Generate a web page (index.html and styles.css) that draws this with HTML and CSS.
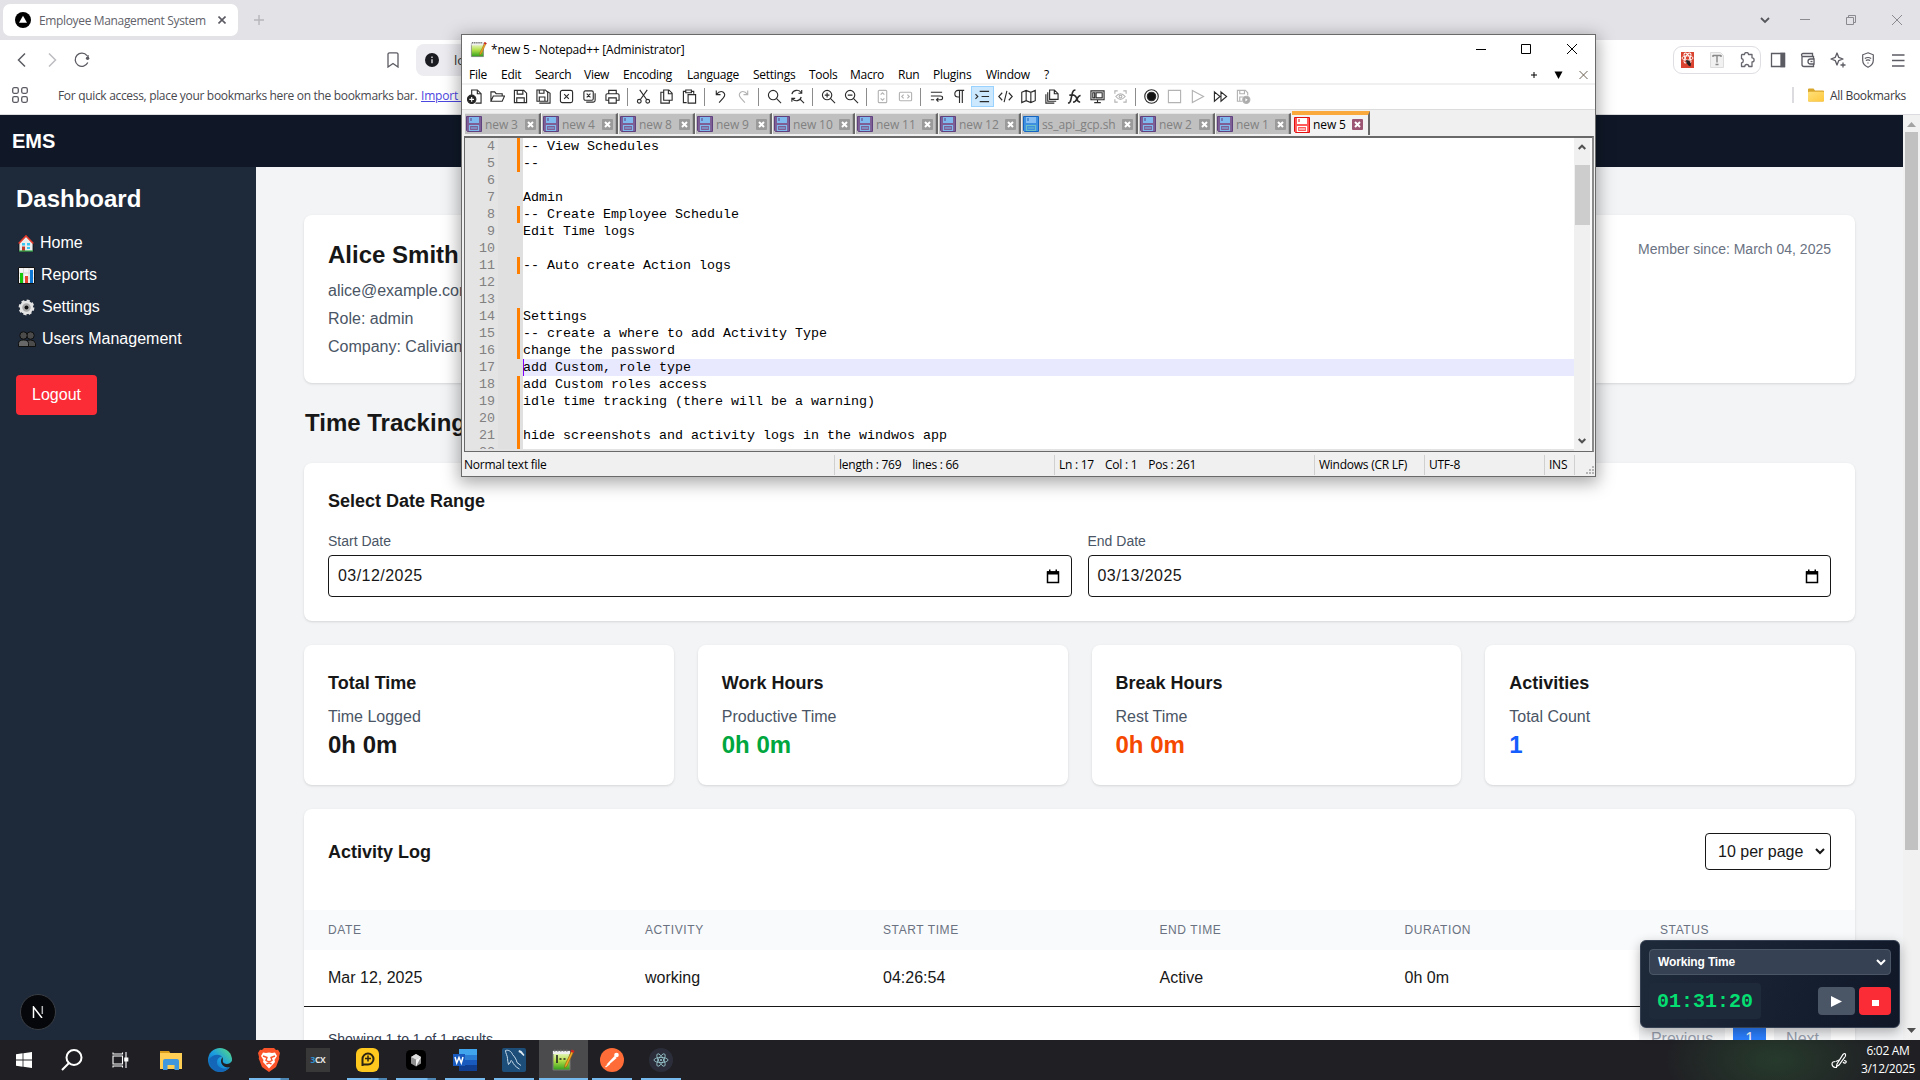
FILE: index.html
```html
<!DOCTYPE html>
<html lang="en">
<head>
<meta charset="utf-8">
<title>Employee Management System</title>
<link rel="stylesheet" href="styles.css">
</head>
<body>
<svg class="defs" width="0" height="0" aria-hidden="true">
  <defs>
    <linearGradient id="edge" x1="0" y1="1" x2="1" y2="0"><stop offset="0" stop-color="#0c59a4"/><stop offset=".5" stop-color="#1b9de2"/><stop offset="1" stop-color="#5be07a"/></linearGradient>
    <linearGradient id="green" x1="0" y1="0" x2="0" y2="1"><stop offset="0" stop-color="#f4fbe0"/><stop offset=".5" stop-color="#b5e04a"/><stop offset="1" stop-color="#2f9e1c"/></linearGradient>
    <linearGradient id="fold" x1="0" y1="0" x2="1" y2="1"><stop offset="0" stop-color="#ffe07a"/><stop offset="1" stop-color="#ffc83c"/></linearGradient>
  </defs>
  <symbol id="disk" viewBox="0 0 16 16"><path d="M.5.5h15v15H1.5l-1-1z" fill="#7d5f95" stroke="#5f4180"/><path d="M3 1h10v6H3z" fill="#7fb9ee"/><path d="M5 2v3" stroke="#5f4180"/><path d="M3 9.500h10M3.500 9.500v5h9v-5M5 12h6" fill="none" stroke="#7fb9ee" stroke-width="1.200"/></symbol>
  <symbol id="disk-blue" viewBox="0 0 16 16"><path d="M.5.5h15v15H1.500l-1-1z" fill="#3f8fe0" stroke="#1565c0"/><path d="M3 1h10v6H3z" fill="#86bdf2"/><path d="M5 2v3" stroke="#1565c0"/><path d="M3.500 9.500h9v5h-9zM5 12h6" fill="none" stroke="#6cc0c8" stroke-width="1.200"/></symbol>
  <symbol id="disk-red" viewBox="0 0 16 16"><path d="M.5.5h15v15H1.500l-1-1z" fill="#ff5a5a" stroke="#e01010"/><path d="M3 1h10v6H3z" fill="#fff"/><path d="M5 2v3" stroke="#e01010"/><path d="M3.500 9.500h9v5h-9zM5 12h6" fill="none" stroke="#fff" stroke-width="1.200"/></symbol>
  <symbol id="tab-close" viewBox="0 0 11 11"><rect width="11" height="11" rx="1"/><path d="M3 3l5 5M8 3L3 8" stroke="#fff" stroke-width="2"/></symbol>
  <symbol id="npp" viewBox="0 0 24 24"><path d="M2 3h17v19H2z" fill="url(#green)" stroke="#777"/><path d="M2 3h17v3H2z" fill="#eee"/><path d="M3 2.500h15" stroke="#666" stroke-width="2" stroke-dasharray="1.500 1.500"/><path d="M21 2l2 1-7 15-2.500 2 .5-3z" fill="#f5a623" stroke="#8a5a10" stroke-width=".6"/><path d="M20.500 1.500l3 1.500-1 2-3-1.500z" fill="#c22"/></symbol>
</svg>

<div class="desktop">
  <section class="browser">
    <div class="tabstrip">
      <div class="tab">
        <svg width="16" height="16" viewBox="0 0 16 16"><circle cx="8" cy="8" r="8"/><path d="M8 3.800l4 7H4z" fill="#fff"/></svg>
        <span class="tab-title">Employee Management System</span>
        <svg class="tab-x" width="8" height="8" viewBox="0 0 8 8" stroke="#5b5b63" stroke-width="1.600"><path d="M.5.5l7 7M7.500.5l-7 7"/></svg>
      </div>
      <svg class="plus" width="10" height="10" viewBox="0 0 10 10" stroke="#b6b6bb" stroke-width="1.400"><path d="M5 0v10M0 5h10"/></svg>
      <div class="win-buttons">
        <svg width="10" height="10" viewBox="0 0 10 10" fill="none" stroke="#55555c" stroke-width="1.800"><path d="M1 3l4 4 4-4"/></svg>
        <svg width="10" height="10" viewBox="0 0 10 10" fill="none" stroke="#8a8a90"><path d="M0 4.500h10"/></svg>
        <svg width="10" height="10" viewBox="0 0 10 10" fill="none" stroke="#8a8a90"><path d="M.5 2.500h7v7h-7zM2.500 2.500v-2h7v7h-2"/></svg>
        <svg width="10" height="10" viewBox="0 0 10 10" fill="none" stroke="#8a8a90"><path d="M0 0l10 10M10 0L0 10"/></svg>
      </div>
    </div>

    <div class="navbar">
      <div class="nav-left">
        <svg width="16" height="16" viewBox="0 0 16 16" fill="none" stroke="#5b5b63" stroke-width="1.500"><path d="M11 1.500L4.500 8l6.500 6.500"/></svg>
        <svg width="16" height="16" viewBox="0 0 16 16" fill="none" stroke="#bdbdc2" stroke-width="1.500"><path d="M5 1.500L11.500 8 5 14.500"/></svg>
        <svg width="16" height="16" viewBox="0 0 16 16" fill="none" stroke="#5b5b63" stroke-width="1.300"><path d="M13.800 10.500A6.600 6.600 0 1 1 13 3.600"/><circle cx="13.600" cy="6.200" r="1.700" fill="#5b5b63" stroke="none"/><path d="M14 3v3"/></svg>
      </div>
      <svg width="12" height="16" viewBox="0 0 12 16" fill="none" stroke="#5b5b63" stroke-width="1.300"><path d="M2.500.8h7a1.500 1.500 0 0 1 1.500 1.500V15l-5-3.500L1 15V2.300A1.500 1.500 0 0 1 2.500.8z"/></svg>
      <div class="urlbar">
        <svg width="14" height="14" viewBox="0 0 14 14"><circle cx="7" cy="7" r="7" fill="#1b1b22"/><path d="M7 6.200v4M7 3.500v1.400" stroke="#fff" stroke-width="1.200"/></svg>
        <span>localhost</span>
      </div>
      <div class="ext-pill">
        <svg width="13" height="16" viewBox="0 0 13 16"><path d="M0 0h13v16H0z" fill="#d9432f"/><g fill="none" stroke="#fff" stroke-width=".9"><ellipse cx="6.500" cy="6" rx="5.500" ry="2.200"/><ellipse cx="6.500" cy="6" rx="5.500" ry="2.200" transform="rotate(60 6.500 6)"/><ellipse cx="6.500" cy="6" rx="5.500" ry="2.200" transform="rotate(120 6.500 6)"/></g><path d="M5 8l3 .5 2 3-.5 3-2-1L5.500 11z" fill="#222"/></svg>
        <svg width="14" height="16" viewBox="0 0 14 16"><path d="M.5.5h10l3 3v12H.5z" fill="#f1f1f1" stroke="#ddd"/><path d="M3 3.500h8M7 3.500v7M5.500 12.500h3M3 3v2M11 3v2" stroke="#888" stroke-width="1.400" fill="none"/></svg>
        <svg width="16" height="16" viewBox="0 0 16 16" fill="none" stroke="#66666e" stroke-width="1.300"><path d="M3 2.500h2.500a2 2 0 0 1 4 0H13v3.300a2 2 0 0 1 0 4.200v4.500H9.800a2 2 0 0 0-4 0H2.500V11a2.300 2.300 0 0 0 0-4.500V3z" stroke-linejoin="round"/></svg>
      </div>
      <div class="nav-right">
        <svg width="16" height="16" viewBox="0 0 16 16" fill="none" stroke="#5b5b63" stroke-width="1.300"><path d="M1.500 1.500h13v13h-13z"/><path d="M11 1.500h3.500v13H11z" fill="#5b5b63"/></svg>
        <svg width="16" height="16" viewBox="0 0 16 16" fill="none" stroke="#5b5b63" stroke-width="1.300"><path d="M2 3.500v9a2 2 0 0 0 2 2h9.500v-10H3a1.400 1.400 0 0 1 0-3h9.500v3"/><path d="M14 7h-3.500a2 2 0 0 0 0 5H14z" fill="#fff"/><path d="M10.500 9.500h2"/></svg>
        <svg width="16" height="16" viewBox="0 0 16 16" fill="none" stroke="#5b5b63" stroke-width="1.300"><path d="M7 1l1.700 4.300L13 7 8.700 8.700 7 13 5.300 8.700 1 7l4.300-1.700z" stroke-linejoin="round"/><path d="M13 10.500v5M10.500 13h5"/></svg>
        <svg width="16" height="16" viewBox="0 0 16 16" fill="none" stroke="#5b5b63" stroke-width="1.200"><path d="M8 .8l5.300 2v5.500c0 3.500-2.600 5.700-5.300 7-2.700-1.300-5.300-3.500-5.300-7V2.800z"/><path d="M4.800 6.500q3.200-2 6.400 0M5.800 8.500q2.200-1.400 4.400 0M8 10.500v1"/></svg>
        <svg width="16" height="16" viewBox="0 0 16 16" fill="none" stroke="#5b5b63" stroke-width="1.400"><path d="M2 3h12.500M2 8.500h12.500M2 14h12.500"/></svg>
      </div>
    </div>

    <div class="bookmarks">
      <svg width="16" height="16" viewBox="0 0 16 16" fill="none" stroke="#5b5b63" stroke-width="1.300"><rect x=".7" y=".7" width="5.600" height="5.600" rx="1.500"/><rect x="9.700" y=".7" width="5.600" height="5.600" rx="1.500"/><rect x=".7" y="9.700" width="5.600" height="5.600" rx="1.500"/><rect x="9.700" y="9.700" width="5.600" height="5.600" rx="1.500"/></svg>
      <span class="hint">For quick access, place your bookmarks here on the bookmarks bar.</span>
      <a class="import">Import bookmarks</a>
      <div class="all-bookmarks">
        <svg width="16" height="14" viewBox="0 0 16 14"><path d="M0 1.500Q0 .5 1 .5h4.500L7 2.500h8q1 0 1 1v9q0 1-1 1H1q-1 0-1-1z" fill="#d9a62c"/><path d="M0 4.500Q0 3.700 1 3.700h14q1 0 1 .8v8q0 1-1 1H1q-1 0-1-1z" fill="url(#fold)"/></svg>
        <span>All Bookmarks</span>
      </div>
    </div>

    <div class="page">
      <div class="app">
        <header class="app-header">EMS</header>
        <div class="app-body">
          <aside class="sidebar">
            <h2>Dashboard</h2>
            <nav>
              <a><svg width="16" height="17" viewBox="0 0 16 17"><path d="M8 .5L1 8v8.500h14V8z" fill="#ececec" stroke="#111" stroke-width=".8"/><path d="M.7 8.500L8 1l7.300 7.500" fill="none" stroke="#e23b2c" stroke-width="1.700"/><path d="M4 8h3v2.500H4zM9 8h3v2.500H9zM9 12h3v2H9z" fill="#38c6f4"/><path d="M4 11.500h3v4.500H4z" fill="#c0392b"/><path d="M1 16h14" stroke="#2fae4a" stroke-width="1.200"/></svg><span>Home</span></a>
              <a><svg width="17" height="17" viewBox="0 0 17 17"><path d="M.5.5h16v16H.5z" fill="#f4f4f4" stroke="#111"/><path d="M5.500 1v15M11 1v15M1 6h15M1 11h15" stroke="#ccc" stroke-width=".7"/><path d="M2 6h3v10H2z" fill="#16c60c"/><path d="M7 9h3v7H7z" fill="#e8442f"/><path d="M12 3h3v13h-3z" fill="#0f78d4"/></svg><span>Reports</span></a>
              <a><svg width="18" height="17" viewBox="0 0 18 17"><circle cx="8.500" cy="8.500" r="6.700" fill="#e4e4e4" stroke="#e4e4e4" stroke-width="2.400" stroke-dasharray="3 2.260"/><circle cx="8.500" cy="8.500" r="6.400" fill="#e4e4e4"/><circle cx="8.500" cy="8.500" r="4.200" fill="#aaa"/><circle cx="8.500" cy="8.500" r="2" fill="#111"/></svg><span>Settings</span></a>
              <a><svg width="18" height="16" viewBox="0 0 18 16" fill="#4b4b4b" stroke="#0b0b0b" stroke-width=".9"><circle cx="12.500" cy="4.500" r="3.700"/><path d="M8 15.500v-3q0-3.500 4.500-3.500t5 3.500v3z"/><circle cx="5.500" cy="4.500" r="3.700"/><path d="M.5 15.500v-3Q.5 9 5.500 9t5 3.500v3z" fill="#686868"/></svg><span>Users Management</span></a>
            </nav>
            <button class="logout">Logout</button>
          </aside>

          <main class="main">
            <section class="card profile">
              <div>
                <h2>Alice Smith</h2>
                <p>alice@example.com</p>
                <p>Role: admin</p>
                <p>Company: Calivian</p>
              </div>
              <span class="since">Member since: March 04, 2025</span>
            </section>
            <h2 class="section-title">Time Tracking</h2>
            <section class="card range">
              <h3>Select Date Range</h3>
              <div class="range-grid">
                <label>Start Date
                  <span class="date">03/12/2025<svg width="14" height="15" viewBox="0 0 14 15"><path d="M1.500 3h11v10.500h-11z" fill="none" stroke="#000" stroke-width="1.500"/><path d="M1 2.300h12v3.200H1zM3 .5h1.500v2H3zM9.500.5H11v2H9.500z"/></svg></span></label>
                <label>End Date
                  <span class="date">03/13/2025<svg width="14" height="15" viewBox="0 0 14 15"><path d="M1.500 3h11v10.500h-11z" fill="none" stroke="#000" stroke-width="1.500"/><path d="M1 2.300h12v3.200H1zM3 .5h1.500v2H3zM9.500.5H11v2H9.500z"/></svg></span></label>
              </div>
            </section>
            <section class="stats">
              <div class="card"><h3>Total Time</h3><p>Time Logged</p><strong>0h 0m</strong></div>
              <div class="card"><h3>Work Hours</h3><p>Productive Time</p><strong class="green">0h 0m</strong></div>
              <div class="card"><h3>Break Hours</h3><p>Rest Time</p><strong class="orange">0h 0m</strong></div>
              <div class="card"><h3>Activities</h3><p>Total Count</p><strong class="blue">1</strong></div>
            </section>
            <section class="card log">
              <div class="log-head">
                <h3>Activity Log</h3>
                <span class="select">10 per page<svg width="10" height="7" viewBox="0 0 10 7" fill="none" stroke="#171717" stroke-width="2"><path d="M1 1l4 4 4-4"/></svg></span>
              </div>
              <div class="row th"><span>Date</span><span>Activity</span><span>Start Time</span><span>End Time</span><span>Duration</span><span>Status</span></div>
              <div class="row td"><span>Mar 12, 2025</span><span>working</span><span>04:26:54</span><span>Active</span><span>0h 0m</span><span></span></div>
              <div class="pager">
                <span class="showing">Showing 1 to 1 of 1 results</span>
                <span class="pg">Previous</span><span class="pg on">1</span><span class="pg">Next</span>
              </div>
            </section>
          </main>
        </div>
      </div>
      <div class="scrollbar">
        <svg width="9" height="5" viewBox="0 0 9 5"><path d="M4.500 0L9 5H0z" fill="#a3a3a3"/></svg>
        <div class="thumb"></div>
        <svg class="down" width="9" height="5" viewBox="0 0 9 5"><path d="M4.500 5L9 0H0z" fill="#505050"/></svg>
      </div>
    </div>
  </section>

  <footer class="taskbar">
    <div class="system-icons">
      <span><svg width="16" height="16" viewBox="0 0 16 16" fill="#fff"><path d="M0 2.200L6.600 1.300v6.300H0zM7.400 1.200L16 0v7.600H7.400zM0 8.400h6.600v6.300L0 13.800zM7.400 8.400H16V16l-8.600-1.200z"/></svg></span>
      <span><svg width="22" height="22" viewBox="0 0 22 22" fill="none" stroke="#fff" stroke-width="2"><circle cx="13" cy="8.500" r="7.500"/><path d="M8 14l-7 7"/></svg></span>
      <span><svg width="17" height="16" viewBox="0 0 17 16" fill="none" stroke="#fff" stroke-width="1.100"><path d="M1 4h9.500v8H1zM1 .5V2h9.500V.5M1 15.500V14h9.500v1.500M14 0v16"/><path d="M12.800 6h3v3h-3z" fill="#fff"/></svg></span>
    </div>
    <div class="apps">
      <span><svg width="24" height="24" viewBox="0 0 24 24"><path d="M1 3h9l2 3h-11z" fill="#d99e1b"/><path d="M1 5h22v16H1z" fill="#ffcf55"/><path d="M4 13q0-2 2-2h12q2 0 2 2v9h-4.500v-5h-7v5H4z" fill="#3f97dd"/></svg></span>
      <span><svg width="24" height="24" viewBox="0 0 24 24"><circle cx="12" cy="12" r="12" fill="url(#edge)"/><path d="M9 14.500c0-3.500 2-5.500 5-5.500-2-3.500-9-3-13 2 .5 8 6 13 11 13 4 0 7.500-2 9.500-4.700-6 3-12.500 0-12.500-4.800z" fill="#1467b8"/><path d="M13 13c0-2 1-2 1-4 2 2-.5 4.500 2 6.300 3 1.500 6 .7 8-2.300v5c-5 3.500-11 0-11-5z" fill="#202024"/></svg></span>
      <span class="run more"><svg width="22" height="24" viewBox="0 0 22 24"><path d="M6 0h10l2 2 2-.3L22 5l-1 4 .3 1.500L18 19l-7 5-7-5L.7 10.500 1 9 0 5l2-3.300L4 2z" fill="#fb542b"/><path d="M5 4.500l3 .5 3-.6 3 .6 3-.5 2 3.500-2.500 4 .5 2-6 6.500-6-6.500.5-2L3 8z" fill="#fff"/><path d="M5 8l4 1.500-1 3 3 1.500 3-1.500-1-3L17 8M8.500 16l2.500-1.200 2.500 1.200" fill="none" stroke="#fb542b" stroke-width="1.400"/></svg></span>
      <span><b class="cx"><i>3</i>CX</b></span>
      <span class="run more"><svg width="23" height="24" viewBox="0 0 23 24"><rect width="23" height="24" rx="6" fill="#ffc81e"/><path d="M6.500 18v-7a5.500 5.500 0 1 1 5.500 5.500H6.500" fill="none" stroke="#2b2413" stroke-width="2"/><path d="M12 7.500v6M9 10.500h6" stroke="#2b2413" stroke-width="1.500"/></svg></span>
      <span class="run more"><svg width="20" height="20" viewBox="0 0 20 20"><rect width="20" height="20" rx="4.500" fill="#000"/><path d="M10 4l5 3v6.500l-5 3-5-3V7z" fill="#8f8f8f"/><path d="M10 4l5 3-5 2.500L5 7z" fill="#ddd"/><path d="M10 9.500L15 7l-5 9.500z" fill="#f4f4f4"/></svg></span>
      <span class="run"><svg width="24" height="24" viewBox="0 0 24 24"><path d="M6 1h18v6H6z" fill="#41a5ee"/><path d="M6 7h18v5H6z" fill="#2b7cd3"/><path d="M6 12h18v5H6z" fill="#185abd"/><path d="M6 17h18v6H6z" fill="#103f91"/><path d="M0 6h12v12H0z" fill="#185abd"/><path d="M2 9l1.700 6L6 9.500 8.300 15 10 9" fill="none" stroke="#fff" stroke-width="1.500"/></svg></span>
      <span class="run"><svg width="24" height="24" viewBox="0 0 24 24"><rect width="24" height="24" rx="2" fill="#1d4e7a"/><path d="M3.500 2.500c3-1 6 1 7 4 2 2 4 5 4.500 8l4 3M3.500 2.500c0 3 2 5 2 8 0 2 .5 4 1 6l2-2.500c0-2 1-2 2 0s3 5 7 7" fill="none" stroke="#c8dcea" stroke-width="1"/><path d="M17 2l2.500 1 3 4-1 1-3-3-2-1z" fill="#dfe9f0"/></svg></span>
      <span class="run active"><svg width="24" height="24"><use href="#npp"/><path d="M6 7v8M8.500 11h2M12.500 11h2" stroke="#222" stroke-width="1.600"/></svg></span>
      <span class="run"><svg width="24" height="24" viewBox="0 0 24 24"><circle cx="12" cy="12" r="12" fill="#ff6c37"/><path d="M6.500 16.500l8-8.500 2.200 2-8.200 7z" fill="#fff"/><circle cx="16.500" cy="7" r="2.300" fill="#fff"/><path d="M5.500 19l4-3" stroke="#fff" stroke-width="1.300"/></svg></span>
      <span class="run"><svg width="24" height="24" viewBox="0 0 24 24"><circle cx="12" cy="12" r="12" fill="#2b2e3a"/><g fill="none" stroke="#9ccbd2" stroke-width=".8"><ellipse cx="12" cy="12" rx="7" ry="2.600"/><ellipse cx="12" cy="12" rx="7" ry="2.600" transform="rotate(60 12 12)"/><ellipse cx="12" cy="12" rx="7" ry="2.600" transform="rotate(120 12 12)"/></g><circle cx="12" cy="12" r="1" fill="#9ccbd2"/></svg></span>
    </div>
    <div class="tray">
      <svg width="17" height="17" viewBox="0 0 17 17" fill="none" stroke="#fff" stroke-width="1.200"><path d="M6 12L12 2.500q2-2 2.500 0t-1 3L8 13l-2.500 1.500z"/><path d="M4.500 9.500Q1 9.500 1 12t3 3.500h2M8 8l-3 1.500M13 8.500q3 .5 2 2t-3-.5"/></svg>
      <div class="clock"><span>6:02 AM</span><span>3/12/2025</span></div>
    </div>
  </footer>

  <section class="npp">
    <div class="npp-title">
      <svg width="17" height="17"><use href="#npp"/></svg>
      <span>*new 5 - Notepad++ [Administrator]</span>
      <div class="npp-win">
        <svg width="10" height="10" viewBox="0 0 10 10" fill="none" stroke="#000"><path d="M0 5.500h10"/></svg>
        <svg width="10" height="10" viewBox="0 0 10 10" fill="none" stroke="#000"><path d="M.5.5h9v9h-9z"/></svg>
        <svg width="10" height="10" viewBox="0 0 10 10" fill="none" stroke="#000"><path d="M0 0l10 10M10 0L0 10"/></svg>
      </div>
    </div>
    <div class="npp-menu">
      <span>File</span><span>Edit</span><span>Search</span><span>View</span><span>Encoding</span><span>Language</span><span>Settings</span><span>Tools</span><span>Macro</span><span>Run</span><span>Plugins</span><span>Window</span><span>?</span>
      <svg width="58" height="10" viewBox="0 0 58 10"><path d="M0 5h6M3 2v6" stroke="#000"/><path d="M23.500 1.500h8L27.500 9z"/><path d="M48.500 1l8 8M56.500 1l-8 8" stroke="#6b6050" fill="none"/></svg>
    </div>
    <div class="tools">
      <span><svg viewBox="0 0 16 16"><path d="M5 7V1h6l4 4v10H9"/><path d="M11 1v4h4"/><circle cx="5" cy="11" r="4.500" fill="#222"/><path d="M5 8.500v5M2.500 11h5" stroke="#fff"/></svg></span>
      <span><svg viewBox="0 0 16 16"><path d="M1 13V3h4l1.500 2H13v2.500M1 13l2.500-5.500H15.500L13 13z"/></svg></span>
      <span><svg viewBox="0 0 16 16"><path d="M1.500 1.500h10l3 3v10h-13zM4.500 1.500v4h6v-4M4 14.500v-5h8v5"/></svg></span>
      <span><svg viewBox="0 0 16 16"><path d="M1 1h9l2.500 2.500V13H1zM3.500 1v3.500h5V1M3.500 13V8.500h6V13M12 2.500l3 2V15H3.500"/></svg></span>
      <span><svg viewBox="0 0 16 16"><rect x="1.500" y="1.500" width="13" height="13" rx="2"/><path d="M5.500 5.500l5 5M10.500 5.500l-5 5"/></svg></span>
      <span><svg viewBox="0 0 16 16"><rect x="2" y="2" width="10" height="10" rx="1.500"/><path d="M5 5l4 4M9 5L5 9M14 4.500V12q0 2-2 2H4.500"/></svg></span>
      <span><svg viewBox="0 0 16 16"><path d="M4 5V1.500h8V5M3.500 12H1V6.500Q1 5 2.500 5h11Q15 5 15 6.500V12h-2.500M4 9.500h8V15H4z"/></svg></span>
      <em></em>
      <span><svg viewBox="0 0 16 16"><path d="M4 1l7.500 10.500M12 1L4.500 11.500"/><circle cx="3.500" cy="13" r="2"/><circle cx="12.500" cy="13" r="2"/></svg></span>
      <span><svg viewBox="0 0 16 16"><path d="M5 1h5.500L14 4.500V12H5zM10 1v4h4M5 3.500H2V15h9v-3"/></svg></span>
      <span><svg viewBox="0 0 16 16"><path d="M5 14.500H1.500V2.500H4M10 2.500h2.500V5M4 1h6v3H4zM6.500 6h8v9h-8z"/></svg></span>
      <em></em>
      <span><svg viewBox="0 0 16 16"><path d="M3.500 1.500v4.500H8M3.500 6q4-5 7.500-2.500 3 2.500 0 6L6.500 14.500"/></svg></span>
      <span><svg class="off" viewBox="0 0 16 16"><path d="M12.500 1.500v4.500H8M12.500 6q-4-5-7.500-2.500-3 2.500 0 6L9.500 14.500"/></svg></span>
      <em></em>
      <span><svg viewBox="0 0 16 16"><circle cx="6.500" cy="6.500" r="5"/><path d="M10 10l5 5"/></svg></span>
      <span><svg viewBox="0 0 16 16"><path d="M2 5.500a5.500 5.500 0 0 1 10-1.500M12.500 1v3.500H9M12 8.500a5.500 5.500 0 0 1-9.500 2M2 13.500V10h3.500M11 11l4 4"/></svg></span>
      <em></em>
      <span><svg viewBox="0 0 16 16"><circle cx="6.500" cy="6.500" r="5"/><path d="M10 10l5 5M4 6.500h5M6.500 4v5"/></svg></span>
      <span><svg viewBox="0 0 16 16"><circle cx="6.500" cy="6.500" r="5"/><path d="M10 10l5 5M4 6.500h5"/></svg></span>
      <em></em>
      <span><svg class="off" viewBox="0 0 16 16"><rect x="3.500" y="1.500" width="9" height="13" rx="1"/><path d="M6 6l2-2 2 2M6 10l2 2 2-2"/></svg></span>
      <span><svg class="off" viewBox="0 0 16 16"><rect x="1.500" y="3.500" width="13" height="9" rx="1"/><path d="M6 6L4 8l2 2M10 6l2 2-2 2"/></svg></span>
      <em></em>
      <span><svg viewBox="0 0 16 16"><path d="M2 3.500h12M2 7.500h10q2.500 0 2.500 2t-2.500 2H8M10 9.500l-2 2 2 2M2 11.500h3.500"/></svg></span>
      <span><svg viewBox="0 0 16 16"><path d="M13 1.500H6.500a3.500 3.500 0 0 0 0 7H8M8 15V1.500M11 1.500V15"/></svg></span>
      <span class="hot"><svg viewBox="0 0 16 16"><path d="M5 2.500h10M7 8h8M5 13.500h10M.5 5.500L3 8 .5 10.500"/></svg></span>
      <span><svg viewBox="0 0 16 16"><path d="M4.500 4L.8 8l3.700 4M11.500 4l3.700 4-3.700 4M9.500 2l-3 12"/></svg></span>
      <span><svg viewBox="0 0 16 16"><path d="M.8 3.500l4.700-2 5 2 4.700-2v11l-4.700 2-5-2-4.700 2zM5.500 1.500v11M10.500 3.500v11"/></svg></span>
      <span><svg viewBox="0 0 16 16"><path d="M6 1h5l4 4v6H6zM11 1v4h4M4 3.500V13h9M2 5.500V15h9"/></svg></span>
      <span><svg class="bold" viewBox="0 0 16 16"><path d="M1 15q2.500 0 3.200-4L5.800 4q.8-3 3.200-3M2.500 6.500H8M7.500 7q2 0 3 3.500t3.500 3.500M14.500 7q-2 0-3.800 3.500T6.500 14"/></svg></span>
      <span><svg viewBox="0 0 16 16"><path d="M1 2h14v9.500H1zM3 4h2v5.500H3zM6.500 4H13v5.500H6.500zM8 11.500V14M4.500 14.500h7"/></svg></span>
      <span><svg class="off" viewBox="0 0 16 16"><path d="M2 5V2h3M11 2h3v3M2 11v3h3M14 11v3h-3M3 8q5-6 10 0-5 6-10 0z"/><circle cx="8" cy="8" r="1.500"/></svg></span>
      <em></em>
      <span><svg viewBox="0 0 16 16"><circle cx="8" cy="8" r="7.200"/><circle cx="8" cy="8" r="4.500" fill="#111"/></svg></span>
      <span><svg class="off" viewBox="0 0 16 16"><path d="M1.500 1.500h13v13h-13z"/></svg></span>
      <span><svg class="off" viewBox="0 0 16 16"><path d="M2.500 1.500L14.500 8l-12 6.500z"/></svg></span>
      <span><svg viewBox="0 0 16 16"><path d="M1.500 3l6 5-6 5zM8.500 3l6 5-6 5z"/></svg></span>
      <span><svg class="off" viewBox="0 0 16 16"><path d="M7 13H1.500V1.500h8.500l2.500 2.500v3M4 1.500V5h5V1.500M4 13V8.500h4"/><circle cx="11" cy="11.500" r="3.800" fill="#aaa"/><path d="M10 9.800l2.500 1.700L10 13.200z" fill="#fff" stroke="none"/></svg></span>
    </div>
    <div class="npp-tabs">
      <div><svg><use href="#disk"/></svg><span>new 3</span><svg class="x"><use href="#tab-close"/></svg></div>
      <div><svg><use href="#disk"/></svg><span>new 4</span><svg class="x"><use href="#tab-close"/></svg></div>
      <div><svg><use href="#disk"/></svg><span>new 8</span><svg class="x"><use href="#tab-close"/></svg></div>
      <div><svg><use href="#disk"/></svg><span>new 9</span><svg class="x"><use href="#tab-close"/></svg></div>
      <div><svg><use href="#disk"/></svg><span>new 10</span><svg class="x"><use href="#tab-close"/></svg></div>
      <div><svg><use href="#disk"/></svg><span>new 11</span><svg class="x"><use href="#tab-close"/></svg></div>
      <div><svg><use href="#disk"/></svg><span>new 12</span><svg class="x"><use href="#tab-close"/></svg></div>
      <div><svg><use href="#disk-blue"/></svg><span>ss_api_gcp.sh</span><svg class="x"><use href="#tab-close"/></svg></div>
      <div><svg><use href="#disk"/></svg><span>new 2</span><svg class="x"><use href="#tab-close"/></svg></div>
      <div><svg><use href="#disk"/></svg><span>new 1</span><svg class="x"><use href="#tab-close"/></svg></div>
      <div class="current"><svg><use href="#disk-red"/></svg><span>new 5</span><svg class="x"><use href="#tab-close"/></svg></div>
    </div>
    <div class="editor">
      <ol class="lines">
        <li class="mod">-- View Schedules</li>
        <li class="mod">--</li>
        <li></li>
        <li>Admin</li>
        <li class="mod">-- Create Employee Schedule</li>
        <li>Edit Time logs</li>
        <li></li>
        <li class="mod">-- Auto create Action logs</li>
        <li></li>
        <li></li>
        <li class="mod">Settings</li>
        <li class="mod">-- create a where to add Activity Type</li>
        <li class="mod">change the password</li>
        <li class="caret">add Custom, role type</li>
        <li class="mod">add Custom roles access</li>
        <li class="mod">idle time tracking (there will be a warning)</li>
        <li class="mod"></li>
        <li class="mod">hide screenshots and activity logs in the windwos app</li>
        <li class="mod"></li>
      </ol>
      <div class="ed-scroll">
        <svg width="8" height="6" viewBox="0 0 8 6" fill="none" stroke="#505050" stroke-width="2"><path d="M.7 5L4 1.700 7.300 5"/></svg>
        <div class="ed-thumb"></div>
        <svg class="down" width="8" height="6" viewBox="0 0 8 6" fill="none" stroke="#505050" stroke-width="2"><path d="M.7 1L4 4.300 7.300 1"/></svg>
      </div>
    </div>
    <div class="status">
      <span>Normal text file</span>
      <span><b>length : 769</b><b>lines : 66</b></span>
      <span><b>Ln : 17</b><b>Col : 1</b><b>Pos : 261</b></span>
      <span>Windows (CR LF)</span><span>UTF-8</span><span>INS</span>
      <span class="grip"><svg width="9" height="9" viewBox="0 0 9 9" fill="#b5b5b5"><path d="M6 0h2v2H6zM6 3h2v2H6zM3 3h2v2H3zM6 6h2v2H6zM3 6h2v2H3zM0 6h2v2H0z"/></svg></span>
    </div>
  </section>

  <div class="dev-badge"><svg width="12" height="12" viewBox="0 0 12 12" fill="none" stroke="#fff" stroke-width="1.500"><path d="M1.500 12V1l8.500 11"/><path d="M10.300 0v8" stroke-opacity=".7"/></svg></div>

  <section class="timer">
    <div class="mode">Working Time<svg width="10" height="7" viewBox="0 0 10 7" fill="none" stroke="#fff" stroke-width="2"><path d="M1 1l4 4 4-4"/></svg></div>
    <div class="timer-row">
      <span class="time">01:31:20</span>
      <button class="play"><svg width="11" height="11" viewBox="0 0 11 11" fill="#fff"><path d="M0 0l11 5.500L0 11z"/></svg></button>
      <button class="stop"><svg width="7" height="6" viewBox="0 0 7 6" fill="#fff"><path d="M0 0h7v6H0z"/></svg></button>
    </div>
  </section>
</div>
</body>
</html>
```
FILE: styles.css
```css
* { box-sizing: border-box; margin: 0; padding: 0; }
body { width: 1920px; height: 1080px; overflow: hidden; font-family: "Liberation Sans", Arial, sans-serif; color: #171717; }
svg { display: block; flex: none; }
.defs { position: absolute; }
.desktop { position: relative; width: 1920px; height: 1080px; display: flex; flex-direction: column; overflow: hidden; }

/* Browser chrome */
.browser { height: 1040px; display: flex; flex-direction: column; background: #fff; }
.tabstrip, .navbar, .bookmarks, .npp, .taskbar { font-family: "Open Sans", "Noto Sans", sans-serif; font-size: 12px; }
.tabstrip { height: 40px; background: #e3e2e7; display: flex; align-items: center; padding-left: 3px; }
.tab { width: 235px; height: 32px; background: #fff; border-radius: 7px; display: flex; align-items: center; padding: 0 12px; color: #62626a; }
.tab-title { margin-left: 8px; letter-spacing: -.35px; white-space: nowrap; }
.tab-x { margin-left: auto; }
.plus { margin-left: 16px; }
.win-buttons { margin-left: auto; display: flex; align-items: center; padding-right: 18px; gap: 36px; }
.win-buttons svg:first-child { margin-right: -6px; }
.navbar { height: 38px; display: flex; align-items: center; padding: 2px 0 0 14px; }
.nav-left { display: flex; gap: 14px; width: 373px; }
.urlbar { margin-left: 17px; width: 900px; height: 32px; border-radius: 8px; background: #ececf1; display: flex; align-items: center; gap: 15px; padding-left: 9px; font-size: 13px; color: #333; }
.ext-pill { margin-left: auto; width: 88px; height: 28px; border: 1px solid #dedee3; border-radius: 9px; display: flex; align-items: center; gap: 16px; padding-left: 7px; }
.ext-pill svg:last-child { margin-left: -1px; }
.nav-right { display: flex; gap: 14px; margin: 0 14px 0 9px; }
.bookmarks { height: 37px; border-bottom: 1px solid #dcdce0; display: flex; align-items: center; padding: 0 14px 2px 12px; color: #3b3b41; white-space: nowrap; }
.hint { margin-left: 30px; width: 363px; letter-spacing: -.32px; color: #47474d; }
.import { color: #4c46e0; text-decoration: underline; letter-spacing: -.2px; }
.all-bookmarks { margin-left: auto; height: 16px; border-left: 2px solid #dcdce0; display: flex; align-items: center; gap: 6px; padding-left: 14px; letter-spacing: -.3px; }

/* Web page */
.page { height: 925px; display: flex; overflow: hidden; }
.app { width: 1903px; display: flex; flex-direction: column; }
.app-header { flex: none; height: 52px; background: #101828; color: #fff; font-weight: bold; font-size: 20px; line-height: 28px; padding: 12px; }
.app-body { flex: 1; display: flex; min-height: 0; }
.sidebar { width: 256px; background: #1e2939; color: #fff; padding: 16px; }
.sidebar h2, .profile h2, .section-title { font-size: 24px; line-height: 32px; }
.sidebar nav { margin-top: 16px; display: flex; flex-direction: column; gap: 8px; }
.sidebar a { display: flex; align-items: center; height: 24px; gap: 6px; padding-left: 2px; line-height: 24px; }
.logout { margin-top: 24px; width: 81px; height: 40px; border: 0; border-radius: 4px; background: #fb2c36; color: #fff; font: 16px "Liberation Sans", Arial, sans-serif; }
.main { width: 1647px; background: #f3f4f6; padding: 48px; overflow: hidden; }
.card { background: #fff; border-radius: 8px; padding: 24px; box-shadow: 0 1px 3px rgba(0,0,0,.1), 0 1px 2px -1px rgba(0,0,0,.1); }
.profile { height: 168px; display: flex; justify-content: space-between; }
.profile h2 { margin-bottom: 8px; }
.profile p { line-height: 24px; margin-bottom: 4px; color: #4a5565; }
.since { font-size: 14px; line-height: 20px; color: #6a7282; }
.section-title { margin: 24px 0; padding-left: 1px; }
h3 { font-size: 18px; line-height: 28px; }
.range h3 { margin-bottom: 16px; }
.range-grid { display: grid; grid-template-columns: 1fr 1fr; gap: 16px; }
.range label { font-size: 14px; line-height: 20px; color: #4a5565; }
.date { margin-top: 4px; height: 42px; border: 1px solid #171717; border-radius: 4px; padding: 0 11px 0 9px; display: flex; align-items: center; justify-content: space-between; font-size: 16px; letter-spacing: .45px; color: #171717; }
.stats { margin: 24px 0; display: grid; grid-template-columns: repeat(4, 1fr); gap: 24px; }
.stats h3 { margin-bottom: 8px; }
.stats p { line-height: 24px; color: #4a5565; }
.stats strong { display: block; font-size: 24px; line-height: 32px; }
.green { color: #00a63e; }
.orange { color: #f54900; }
.blue { color: #155dfc; }
.log { padding: 0; }
.log-head { height: 101px; padding: 24px 24px 40px; display: flex; align-items: center; justify-content: space-between; }
.select { width: 126px; height: 37px; border: 1px solid #171717; border-radius: 4px; padding: 0 5px 0 12px; display: flex; align-items: center; justify-content: space-between; }
.row { display: grid; grid-template-columns: 317px 238px 276.500px 245px 255.500px 219px; align-items: center; }
.row span { padding-left: 24px; }
.th { height: 40px; background: #f9fafb; color: #6a7282; font-size: 12px; letter-spacing: .6px; text-transform: uppercase; }
.td { height: 57px; border-bottom: 1px solid #171717; }
.pager { display: flex; align-items: center; height: 64px; padding: 0 24px; gap: 8px; }
.showing { margin-right: auto; font-size: 14px; color: #364153; }
.pg { height: 32px; line-height: 31px; padding: 0 12px; border-radius: 4px; background: #f3f4f6; color: #99a1af; }
.pg.on { background: #2b7fff; color: #fff; }
.scrollbar { width: 17px; background: #f1f1f1; display: flex; flex-direction: column; align-items: center; padding: 7px 0; }
.thumb { margin-top: 5px; width: 13px; height: 718px; background: #c1c1c1; }
.down { margin-top: auto; }

/* Taskbar */
.taskbar { height: 40px; display: flex; background: radial-gradient(ellipse 110px 60px at 1775px 20px, #263a2c, transparent), #202024; }
.system-icons { display: grid; grid-template-columns: repeat(3, 48px); width: 146.500px; }
.system-icons span, .apps span { display: flex; align-items: center; justify-content: center; }
.apps { display: grid; grid-template-columns: repeat(11, 49px); }
.apps span { position: relative; }
.run::after { content: ""; position: absolute; left: 4.500px; right: 4.500px; bottom: 0; height: 2px; background: #76b9ed; }
.more::after { background: linear-gradient(90deg, #76b9ed 31px, #4d86b3 32px); }
.apps .active { background: #4b4b4e; }
.active::after { left: 0; right: 0; }
.cx { width: 24px; height: 24px; background: #383838; color: #e6e6e6; font-size: 8.500px; line-height: 24px; text-align: center; letter-spacing: -.4px; }
.cx i { color: #2f8fd0; font-style: normal; }
.tray { margin-left: auto; display: flex; align-items: center; gap: 13px; padding-right: 5px; color: #fff; }
.clock { display: flex; flex-direction: column; align-items: center; width: 54px; line-height: 18px; letter-spacing: -.3px; white-space: nowrap; }

/* Text editor window */
.npp { position: absolute; left: 461px; top: 34px; width: 1135px; height: 443px; background: #f0f0f0; border: 1px solid #6a6a6a; box-shadow: 0 4px 16px 2px rgba(0,0,0,.34); color: #000; display: flex; flex-direction: column; white-space: nowrap; }
.npp-title { height: 29px; background: #fff; display: flex; align-items: center; padding: 0 18px 1px 8px; gap: 4px; letter-spacing: -.22px; }
.npp-win { margin-left: auto; display: flex; gap: 36px; }
.npp-win svg:first-child { margin-right: -1px; }
.npp-menu { height: 21px; background: #fff; border-bottom: 2px solid #f0f0f0; display: grid; grid-template-columns: 32px 34px 49px 39px 64px 66px 56px 41px 48px 35px 53px 58px 24px 1fr; align-items: center; padding: 2px 6px 0 7px; letter-spacing: -.27px; line-height: 17px; }
.npp-menu svg { justify-self: end; }
.tools { height: 24px; background: #fff; display: flex; align-items: center; padding: 0 0 1px .5px; }
.tools span { width: 23px; height: 21px; display: flex; align-items: center; justify-content: center; }
.tools em { width: 1px; height: 18px; margin: 0 3.500px; background: #8c8c8c; }
.tools svg { width: 15px; height: 15px; fill: none; stroke: #2b2b2b; stroke-width: 1.200; }
.tools .off { stroke: #b3b3b3; }
.tools .bold { stroke-width: 1.700; }
.tools .hot { background: #cce8ff; outline: 1px solid #99d1ff; outline-offset: -1px; }
.npp-tabs { height: 27px; border-top: 1px solid #dcdcdc; display: grid; grid-template-columns: 77px 77px 77px 77px 83px 83px 83px 117px 77px 76px 79px; padding: 3px 0 0 3px; }
.npp-tabs div { height: 21px; margin-right: 1px; background: #c0c0c0; border-right: 2px solid #696969; border-top: 1px solid #e4e4e4; color: #808080; display: flex; align-items: center; padding: 0 3px 0 1px; letter-spacing: -.1px; box-shadow: inset -1px 0 #aaa; }
.npp-tabs svg { width: 16px; height: 16px; margin-right: 3px; }
.npp-tabs .x { margin: 0 0 0 auto; width: 11px; height: 11px; fill: #9a9a9a; }
.npp-tabs .current { margin-top: -2px; height: 24px; background: #f3f3f3; border-top: 4px solid #faa93c; color: #000; padding: 0 5px 1px 2px; box-shadow: none; }
.npp-tabs .current .x { fill: #9c5573; }
.editor { margin: 0 1px 0 2px; height: 316px; border: 2px solid #696969; border-left-width: 1px; border-right-color: #8a8a8a; border-bottom: 1px solid #696969; display: flex; background: #fff; overflow: hidden; }
.lines { flex: 1; list-style: none; counter-reset: ln 3; font: 13.333px/17px "Liberation Mono", monospace; background: linear-gradient(90deg, #e4e4e4 33px, #e0e0e0 33px 58px, #fff 58px); border-bottom: 2px solid #e3e3e3; height: 313px; overflow: hidden; }
.lines li { height: 17px; display: flex; counter-increment: ln; white-space: pre; background: linear-gradient(90deg, transparent 58px, #fff 58px); }
.lines li::before { content: counter(ln); width: 30px; margin-right: 28px; text-align: right; color: #808080; }
.lines .mod { background: linear-gradient(90deg, transparent 52px, #ff8000 52px 55px, transparent 55px 58px, #fff 58px); }
.lines .caret { background: linear-gradient(90deg, transparent 58px, #8000ff 58px 59px, #e8e8ff 59px); }
.ed-scroll { width: 18px; background: #f0f0f0; border-right: 2px solid #fafafa; display: flex; flex-direction: column; align-items: center; padding: 6px 0 7px; }
.ed-thumb { margin-top: 15px; width: 15px; height: 60px; background: #cdcdcd; }
.status { flex: 1; display: grid; grid-template-columns: 373px 220px 260px 110px 120px 30px 1fr; align-items: center; letter-spacing: -.25px; padding-top: 2px; }
.status span { height: 20px; line-height: 20px; border-right: 1px solid #d0d0d0; padding-left: 4px; display: flex; gap: 11px; }
.status span:first-child { padding-left: 2px; }
.status b { font-weight: normal; }
.status .grip { border: 0; align-items: flex-end; justify-content: flex-end; }

/* Floating elements */
.dev-badge { position: absolute; left: 20px; top: 994px; width: 36px; height: 36px; border-radius: 50%; background: #06070a; border: 1px solid #3a3f46; display: flex; align-items: center; justify-content: center; }
.timer { position: absolute; left: 1640px; top: 940px; width: 260px; height: 88px; padding: 8px; border: 1px solid #364153; border-radius: 6px; background: linear-gradient(110deg, #1e2939, #101828); box-shadow: 0 4px 12px rgba(0,0,0,.3); }
.mode { height: 26px; border: 1px solid #4a5565; border-radius: 4px; background: #364153; color: #fff; font-size: 12px; font-weight: bold; letter-spacing: -.15px; display: flex; align-items: center; justify-content: space-between; padding: 0 4px 0 8px; }
.timer-row { margin-top: 8px; display: flex; align-items: center; gap: 4px; }
.time { width: 112px; height: 36px; border-radius: 4px; background: #1e2939; color: #05df72; font: bold 20px/37px "Liberation Mono", monospace; padding-left: 8px; margin-right: auto; }
.timer button { border: 0; border-radius: 4px; width: 32px; height: 28px; display: flex; align-items: center; justify-content: center; background: #fb2c36; }
.timer .play { width: 37px; background: #4a5565; }
.stop svg { margin-top: 3px; }
```
